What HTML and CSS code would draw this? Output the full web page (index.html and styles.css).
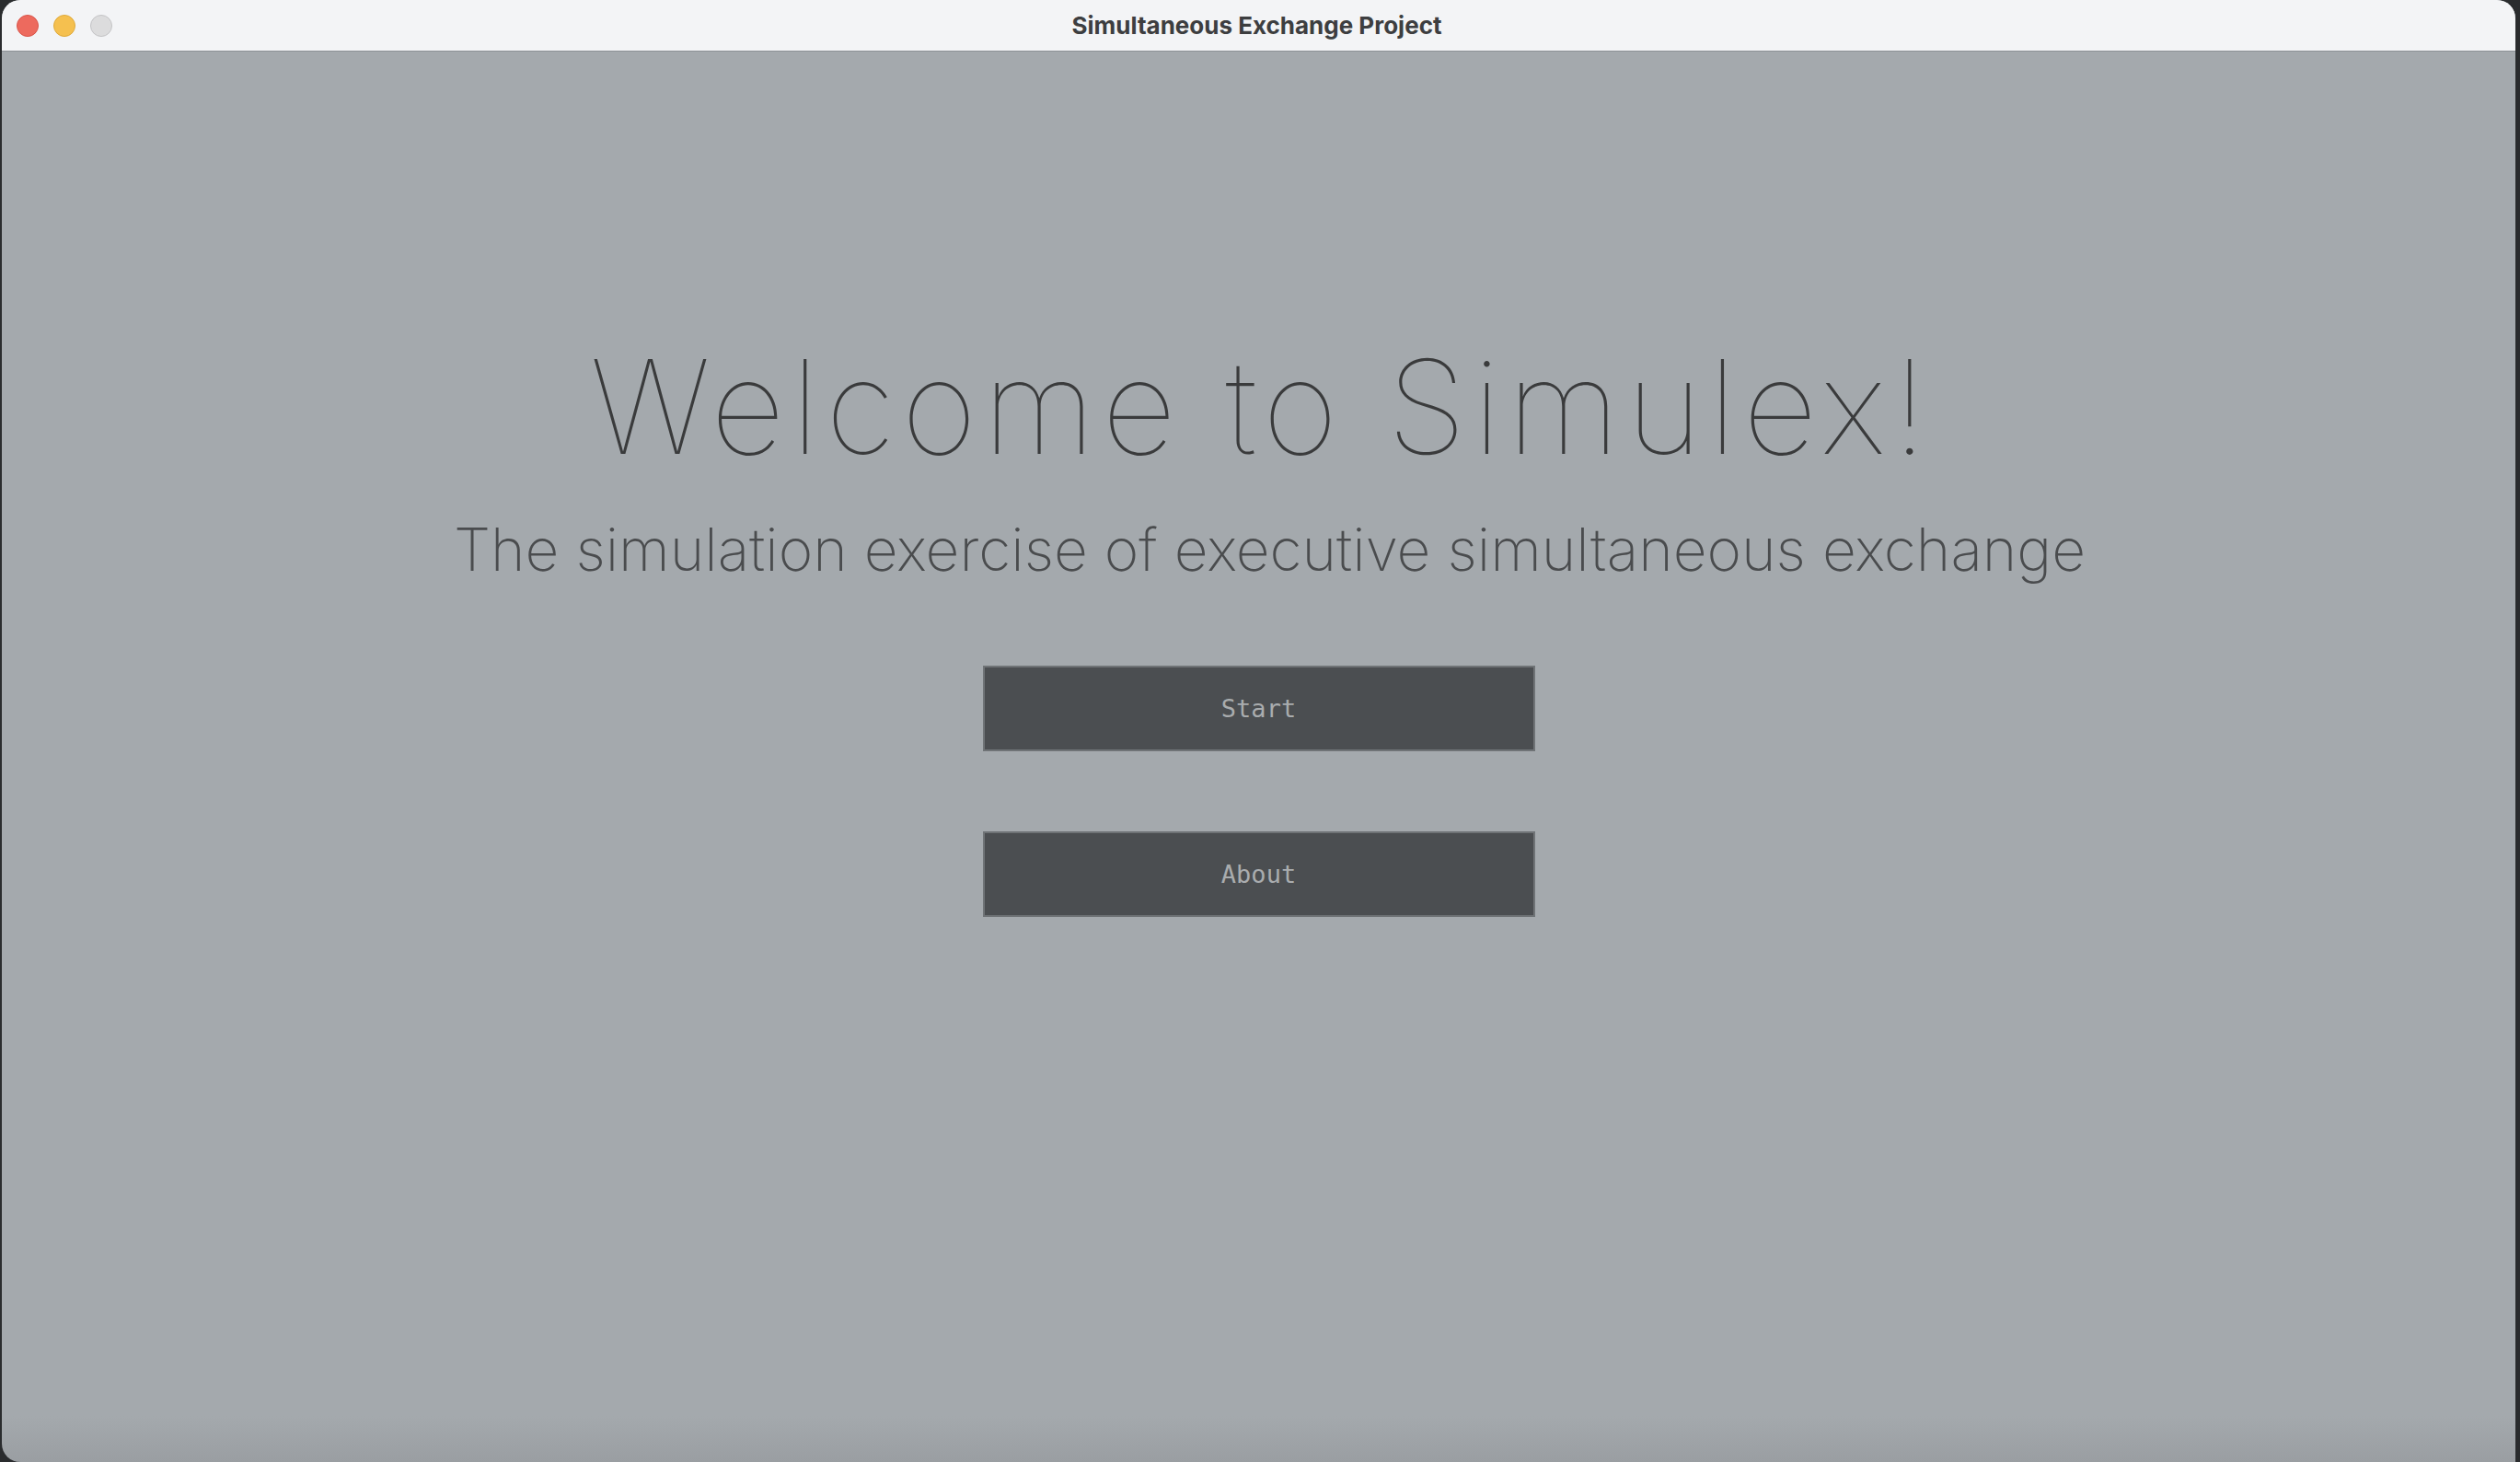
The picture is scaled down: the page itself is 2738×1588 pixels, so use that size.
FILE: index.html
```html
<!DOCTYPE html>
<html>
<head>
<meta charset="utf-8">
<link rel="stylesheet" href="styles.css">
</head>
<body>
<div class="window">
  <div class="titlebar">
    <div class="lights">
      <span class="light red"></span>
      <span class="light yellow"></span>
      <span class="light gray"></span>
    </div>
    <div class="title">Simultaneous Exchange Project</div>
  </div>
  <main class="content">
    <h1 class="heading">Welcome to Simulex!</h1>
    <p class="subtitle">The simulation exercise of executive simultaneous exchange</p>
    <div class="buttons">
      <button class="btn">Start</button>
      <button class="btn">About</button>
    </div>
  </main>
</div>
</body>
</html>
```
FILE: styles.css
```css
html, body {
  margin: 0;
  padding: 0;
  height: 100%;
}
body {
  background: #2a2c2e;
  padding: 0 5px 0 2px;
  box-sizing: border-box;
  overflow: hidden;
}
.window {
  height: 100vh;
  background: linear-gradient(to bottom, #a4a9ad calc(100% - 50px), #9a9ea2 100%);
  border-radius: 20px 20px 0 20px;
  overflow: hidden;
  display: flex;
  flex-direction: column;
}
.titlebar {
  height: 55px;
  flex: none;
  background: #f3f4f6;
  border-bottom: 1px solid #8d9195;
  display: flex;
  align-items: center;
  justify-content: center;
  position: relative;
}
.lights {
  position: absolute;
  left: 16px;
  top: 16px;
  display: flex;
  gap: 16px;
}
.light {
  width: 24px;
  height: 24px;
  border-radius: 50%;
  box-sizing: border-box;
  display: block;
}
.red { background: #ed6a5e; border: 1px solid #d8554a; }
.yellow { background: #f5c04f; border: 1px solid #dea93b; }
.gray { background: #dcdcdd; border: 1px solid #c3c3c5; }
.title {
  font-family: Inter, "Liberation Sans", sans-serif;
  font-weight: 700;
  font-size: 26px;
  color: #3d3e40;
  margin-left: -4px;
}
.content {
  display: flex;
  flex-direction: column;
  align-items: center;
  padding-top: 315px;
}
.heading {
  margin: 0;
  font-family: Inter, "Liberation Sans", sans-serif;
  font-weight: 100;
  font-size: 141px;
  line-height: 1;
  color: #3a3b3c;
  letter-spacing: 7px;
  padding-left: 7px;
}
.subtitle {
  margin: 53px 0 0;
  font-family: Inter, "Liberation Sans", sans-serif;
  font-weight: 200;
  font-size: 64px;
  line-height: 1;
  color: #4a4c4e;
  letter-spacing: 0;
  padding-left: 24px;
}
.buttons {
  margin-top: 94px;
  display: flex;
  flex-direction: column;
  gap: 87px;
}
.btn {
  width: 600px;
  height: 93px;
  box-sizing: border-box;
  background: #4b4e51;
  border: 2px solid #6f7376;
  color: #a9acae;
  font-family: "DejaVu Sans Mono", monospace;
  font-size: 27px;
  padding: 0;
  cursor: pointer;
}
```
